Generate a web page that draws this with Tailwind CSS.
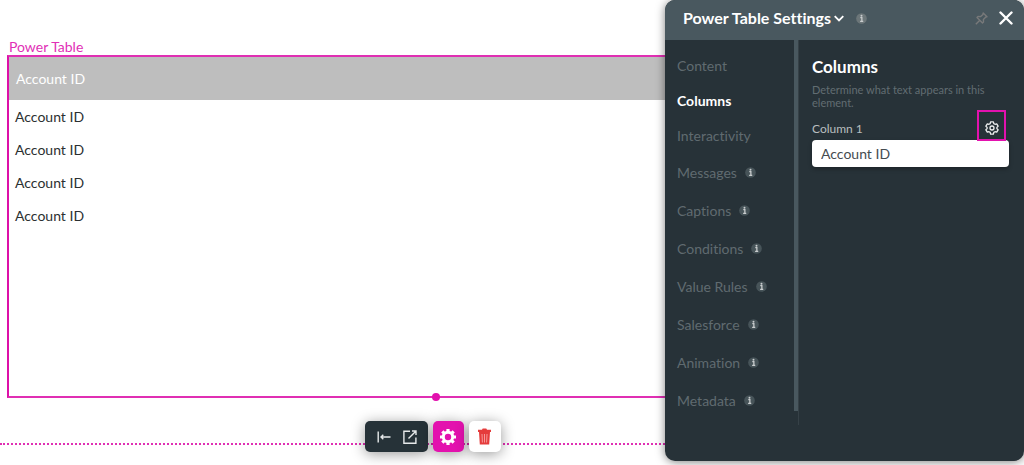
<!DOCTYPE html>
<html lang="en">
<head>
<meta charset="utf-8">
<meta name="viewport" content="width=device-width, initial-scale=1">
<title>Power Table Settings</title>
<script src="https://cdn.jsdelivr.net/npm/@tailwindcss/browser@4"></script>
</head>
<body class="relative min-h-screen overflow-x-hidden bg-white font-['Lato',sans-serif] text-[#2b2f31] [font-variant-ligatures:none]">
<svg class="hidden" aria-hidden="true">
  <symbol id="info" viewBox="0 0 12 12"><circle cx="6" cy="6" r="5.8" fill="#475459"/><path d="M4.700 5h1.700v4M4.500 9.200h3.400" fill="none" stroke="#c9cdce" stroke-width="1.400"/><circle cx="6" cy="2.900" r="1.100" fill="#c9cdce"/></symbol>
</svg>

<main class="mr-[159px] pt-[38px]">
  <section class="relative ml-[7px]">
    <h2 class="pl-[2px] text-[14px] leading-[17px] text-[#e12fb6]">Power Table</h2>
    <div class="h-[343px] border-2 border-[#e02fb3] border-l-[#dd10a8]">
      <table class="w-full text-left text-[14px]">
        <thead><tr class="h-[43px] bg-[#bebebe]"><th class="pl-[7px] font-normal text-white">Account ID</th></tr></thead>
        <tbody>
          <tr class="h-[33px]"><td class="pl-[6px]">Account ID</td></tr>
          <tr class="h-[33px]"><td class="pl-[6px]">Account ID</td></tr>
          <tr class="h-[33px]"><td class="pl-[6px]">Account ID</td></tr>
          <tr class="h-[33px]"><td class="pl-[6px]">Account ID</td></tr>
        </tbody>
      </table>
    </div>
    <span class="absolute -bottom-[3px] left-1/2 size-2 -translate-x-1/2 rounded-full bg-[#e210ad]"></span>
  </section>

  <div class="relative mt-[23px] flex justify-center gap-[5px]">
    <span class="absolute inset-x-0 top-[22px] border-t-2 border-dotted border-[#e02fb3]"></span>
    <div class="relative flex h-[31px] w-[63px] items-center justify-center gap-3 rounded-[5px] bg-[#263238] pl-[2px] shadow-[0_2px_14px_rgba(0,0,0,0.4)]">
      <button aria-label="Move to start" class="text-[#e6e9ea]"><svg class="h-[14px] w-[14px]" viewBox="0 0 14 14" fill="none" stroke="currentColor" stroke-width="1.4"><path d="M1.2 1.500v11M13.500 7H4M6.300 4.700 4 7l2.300 2.300"/></svg></button>
      <button aria-label="Open" class="text-[#e6e9ea]"><svg class="h-[14px] w-[14px]" viewBox="0 0 14 14" fill="none" stroke="currentColor" stroke-width="1.4"><path d="M7 1.200H.9v12.100h12V7.500M5.500 8.500l7.300-7.300M9 1h4v4"/></svg></button>
    </div>
    <button aria-label="Settings" class="relative flex h-[31px] w-[31px] items-center justify-center rounded-[5px] bg-[#e312ae] text-white shadow-[0_2px_14px_rgba(0,0,0,0.4)]">
      <svg class="size-[18px]" viewBox="0 0 18 18" fill="none" stroke="currentColor"><circle cx="9" cy="9" r="4.700" stroke-width="3"/><path d="M9 1v3M9 14v3M1 9h3M14 9h3M3.300 3.300l2 2M12.700 12.700l2 2M3.300 14.700l2-2M12.700 5.300l2-2" stroke-width="3.200"/></svg>
    </button>
    <button aria-label="Delete" class="relative flex h-[31px] w-8 items-center justify-center rounded-[5px] bg-white text-[#e53c3c] shadow-[0_2px_14px_rgba(0,0,0,0.4)]">
      <svg class="h-[17px] w-[13px]" viewBox="0 0 13 17"><path d="M0 1.800h4L4.700.4h3.600L9 1.800h4V4H0zM1 4h11l-.8 12.400H1.800z" fill="currentColor"/><path d="M4 6l.4 8.500M6.500 6v8.500M9 6l-.4 8.500" stroke="#f7a5a5" stroke-width=".9"/></svg>
    </button>
  </div>
</main>

<aside class="absolute right-0 top-0 flex min-h-[461px] w-[359px] flex-col rounded-[10px] bg-[#273238] shadow-[0_1px_10px_rgba(0,0,0,0.5)]">
  <header class="flex h-10 items-center rounded-t-[10px] bg-[#49585f] pl-[18px] pr-[11px] pb-[4px] text-white">
    <button class="flex items-center gap-[3px] text-[16px] font-bold leading-5">Power Table Settings
      <svg class="h-[7px] w-[10px]" viewBox="0 0 10 7" fill="none" stroke="currentColor" stroke-width="1.800"><path d="M.7 1.200 5 5.500l4.300-4.300"/></svg>
    </button>
    <svg class="ml-[12px] size-[11px]" viewBox="0 0 12 12"><circle cx="6" cy="6" r="5.800" fill="#6c7679"/><path d="M4.700 5h1.700v4M4.500 9.200h3.400" fill="none" stroke="#c9cdce" stroke-width="1.400"/><circle cx="6" cy="2.900" r="1.100" fill="#c9cdce"/></svg>
    <button aria-label="Pin panel" class="ml-auto text-[#78797a]"><svg class="size-[13px]" viewBox="0 0 13 13" fill="none" stroke="currentColor" stroke-width="1.400" stroke-linejoin="round"><path d="M8.200 1 12 4.800l-1.400.4-2.200 2.200.1 2.700-1 .9L2 5.500l1-1 2.700.1L7.900 2.400zM4.600 8.400.8 12.200"/></svg></button>
    <button aria-label="Close" class="ml-[11px]"><svg class="size-[14px]" viewBox="0 0 14 14" stroke="currentColor" stroke-width="2.400" stroke-linecap="round"><path d="M1.500 1.500l11 11M12.500 1.500l-11 11"/></svg></button>
  </header>
  <div class="flex flex-1">
    <nav aria-label="Settings sections" class="h-[371px] w-[133px] shrink-0 border-r-4 border-[#49585f] pt-2 text-[14px] text-[#606b70]">
      <a href="#" class="flex h-[35px] items-center pl-3">Content</a>
      <a href="#" aria-current="page" class="flex h-[35px] items-center pl-3 font-bold text-white">Columns</a>
      <a href="#" class="flex h-[35px] items-center pl-3">Interactivity</a>
      <a href="#" class="flex h-[38px] items-center gap-2 pl-3">Messages <svg class="size-[11px]"><use href="#info"/></svg></a>
      <a href="#" class="flex h-[38px] items-center gap-2 pl-3">Captions <svg class="size-[11px]"><use href="#info"/></svg></a>
      <a href="#" class="flex h-[38px] items-center gap-2 pl-3">Conditions <svg class="size-[11px]"><use href="#info"/></svg></a>
      <a href="#" class="flex h-[38px] items-center gap-2 pl-3">Value Rules <svg class="size-[11px]"><use href="#info"/></svg></a>
      <a href="#" class="flex h-[38px] items-center gap-2 pl-3">Salesforce <svg class="size-[11px]"><use href="#info"/></svg></a>
      <a href="#" class="flex h-[38px] items-center gap-2 pl-3">Animation <svg class="size-[11px]"><use href="#info"/></svg></a>
      <a href="#" class="flex h-[38px] items-center gap-2 pl-3">Metadata <svg class="size-[11px]"><use href="#info"/></svg></a>
    </nav>
    <section class="mb-9 min-w-0 flex-1 border-l border-[#364147] pl-[13px] pr-[15px] pt-4">
      <h1 class="text-[17px] font-bold leading-[22px] text-white">Columns</h1>
      <p class="mt-[5px] text-[11px] leading-[13px] text-[#626d72]">Determine what text appears in this element.</p>
      <div class="relative flex h-[32px] items-end justify-between">
        <label for="column-1" class="pb-1 text-[12px] leading-4 text-[#b9bebf]">Column 1</label>
        <button aria-label="Column 1 settings" class="relative z-10 mr-[3px] flex h-[31px] w-[29px] items-center justify-center border-2 border-[#e312ae] pt-1 text-[#eceeee]">
          <svg class="size-[14px]" viewBox="0 0 14 14" fill="none" stroke="currentColor" stroke-width="1.300" stroke-linejoin="round"><circle cx="7" cy="7" r="2"/><path d="M5.600.9h2.800l.4 1.700 1.200.7 1.700-.5 1.400 2.400L11.900 6.400v1.200l1.200 1.200-1.400 2.400-1.700-.5-1.200.7-.4 1.700H5.600l-.4-1.700-1.200-.7-1.700.5L.9 8.800l1.200-1.200V6.400L.9 5.200l1.400-2.400 1.700.5 1.200-.7z"/></svg>
        </button>
      </div>
      <input id="column-1" type="text" value="Account ID" class="-mt-px block h-[27px] w-full rounded-[4px] bg-white px-[9px] text-[14px] text-[#454b50] shadow-[0_2px_4px_rgba(0,0,0,0.3)]">
    </section>
  </div>
</aside>
</body>
</html>
